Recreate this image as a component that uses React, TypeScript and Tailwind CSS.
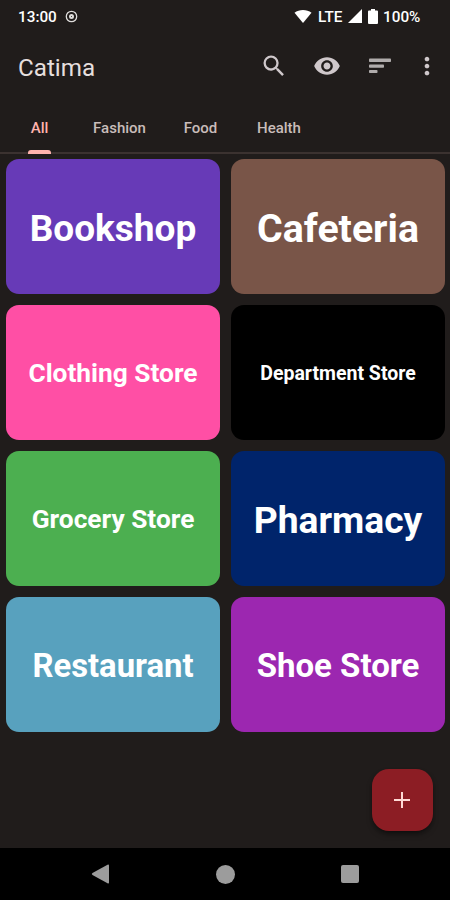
import clsx from "clsx";
import { MdMoreVert, MdSearch, MdVisibility } from "react-icons/md";

const tabs = [
    { name: "All", style: "ml-[30px] w-[19px]" },
    { name: "Fashion", style: "ml-[43px] w-[55px]" },
    { name: "Food", style: "ml-[36px] w-[35px]" },
    { name: "Health", style: "ml-[38px] w-[46px]" },
];

const cards = [
    { name: "Bookshop", style: "bg-[#673ab7] pt-1 text-[37px]" },
    { name: "Cafeteria", style: "bg-[#795548] pt-1.5 text-[39.3px]" },
    { name: "Clothing Store", style: "bg-[#ff4fa5] pt-[3px] text-[26.3px]" },
    { name: "Department Store", style: "bg-black pt-[3px] text-[19.5px]" },
    { name: "Grocery Store", style: "bg-[#4caf50] pt-[2px] text-[26.3px]" },
    { name: "Pharmacy", style: "bg-[#00246b] pt-1 text-[37.2px]" },
    { name: "Restaurant", style: "bg-[#58a1be] pt-[5px] text-[32.8px]" },
    { name: "Shoe Store", style: "bg-[#9c27b0] pt-[3px] text-[33px]" },
];

function StatusBar() {
    return (
        <div className="flex h-8 items-center pl-[18px] pr-[30px] text-[15.300px] font-medium text-white">
            <span className="w-[40px] whitespace-nowrap pt-[2px]">13:00</span>
            <svg className="ml-[7px]" width="13" height="13" viewBox="0 0 13 13" fill="none" stroke="#dedcdb">
                <circle cx="6.5" cy="6.5" r="5.2" strokeWidth="1.3" />
                <circle cx="6.5" cy="6.5" r="1.500" strokeWidth="2" />
            </svg>
            <div className="ml-auto flex items-center">
                <svg width="18" height="14" viewBox="0 0 18 14" fill="#fff">
                    <path d="M9 14 .5 3.700C5.200 0 12.800 0 17.500 3.700Z" />
                </svg>
                <span className="ml-[6px] w-[26px] whitespace-nowrap pt-[2px]">LTE</span>
                <svg className="ml-[4px]" width="14" height="14" viewBox="0 0 14 14" fill="#fff">
                    <path d="M14 0v14H0Z" />
                </svg>
                <svg className="ml-[6px]" width="10" height="15" viewBox="0 0 10 15" fill="#fff">
                    <path d="M3 0h4v1.500h2q1 0 1 1V14q0 1-1 1H1q-1 0-1-1V2.500q0-1 1-1h2Z" />
                </svg>
                <span className="ml-[5px] w-[37px] whitespace-nowrap pt-[2px]">100%</span>
            </div>
        </div>
    );
}

function AppBar() {
    return (
        <header className="flex h-[68px] items-center pl-[18px] pr-[9px] text-[#cfc8cb]">
            <h1 className="pt-1 text-[24.200px] text-[#e6dfde]">Catima</h1>
            <div className="ml-auto flex items-center pb-px">
                <MdSearch size={28} />
                <MdVisibility size={28} className="ml-[25px]" />
                <svg className="ml-[28px]" width="22" height="16" viewBox="0 0 22 16" fill="#b0acac">
                    <rect width="22" height="3.500" y=".500" rx=".800" />
                    <rect width="15" height="3.200" y="6.500" rx=".800" />
                    <rect width="8.500" height="3" y="12" rx=".800" />
                </svg>
                <MdMoreVert size={28} className="ml-[22px]" />
            </div>
        </header>
    );
}

function TabBar() {
    return (
        <nav className="flex h-[54px] border-b-2 border-[#3b3230] text-[15px] font-medium">
            {tabs.map((tab, i) => (
                <div
                    key={tab.name}
                    className={clsx(
                        "relative flex items-center justify-center whitespace-nowrap pt-1",
                        tab.style,
                        i === 0 ? "text-[#ffb3ad]" : "text-[#c9bcba]"
                    )}
                >
                    {tab.name}
                    {i === 0 && <span className="absolute -bottom-[2px] h-[4px] w-[23px] rounded-t-[3px] bg-[#ffb3ad]" />}
                </div>
            ))}
        </nav>
    );
}

export default function App() {
    return (
        <div className="flex h-[900px] w-[450px] flex-col overflow-hidden bg-[#201c1b] font-[Roboto,sans-serif]">
            <StatusBar />
            <AppBar />
            <TabBar />

            <main className="grid grid-cols-2 gap-[11px] pl-[6px] pr-[5px] pt-[5px]">
                {cards.map((card) => (
                    <div
                        key={card.name}
                        className={clsx(
                            "flex h-[135px] items-center justify-center whitespace-nowrap rounded-[13px] font-bold text-white",
                            card.style
                        )}
                    >
                        {card.name}
                    </div>
                ))}
            </main>

            <div className="mt-auto flex justify-end pb-[17px] pr-[17px]">
                <button className="flex h-[62px] w-[61px] items-center justify-center rounded-[17px] bg-[#8c1d24] pr-px shadow-md shadow-black/40">
                    <svg width="16" height="16" viewBox="0 0 16 16" stroke="#ffdad6" strokeWidth="2">
                        <path d="M8 0v16M0 8h16" />
                    </svg>
                </button>
            </div>

            {/* Android navigation */}
            <div className="flex h-[52px] shrink-0 items-center justify-between bg-black pl-[91px] pr-[91px]">
                <svg width="19" height="20" viewBox="0 0 19 20" fill="#9c9c9c">
                    <path d="M1.500 9 16.500.7q1.500-.7 1.500.8v17q0 1.500-1.500.8L1.500 11q-1.500-1 0-2Z" />
                </svg>
                <span className="size-[19px] rounded-full bg-[#9c9c9c]" />
                <span className="size-[18px] rounded-[2px] bg-[#9c9c9c]" />
            </div>
        </div>
    );
}
